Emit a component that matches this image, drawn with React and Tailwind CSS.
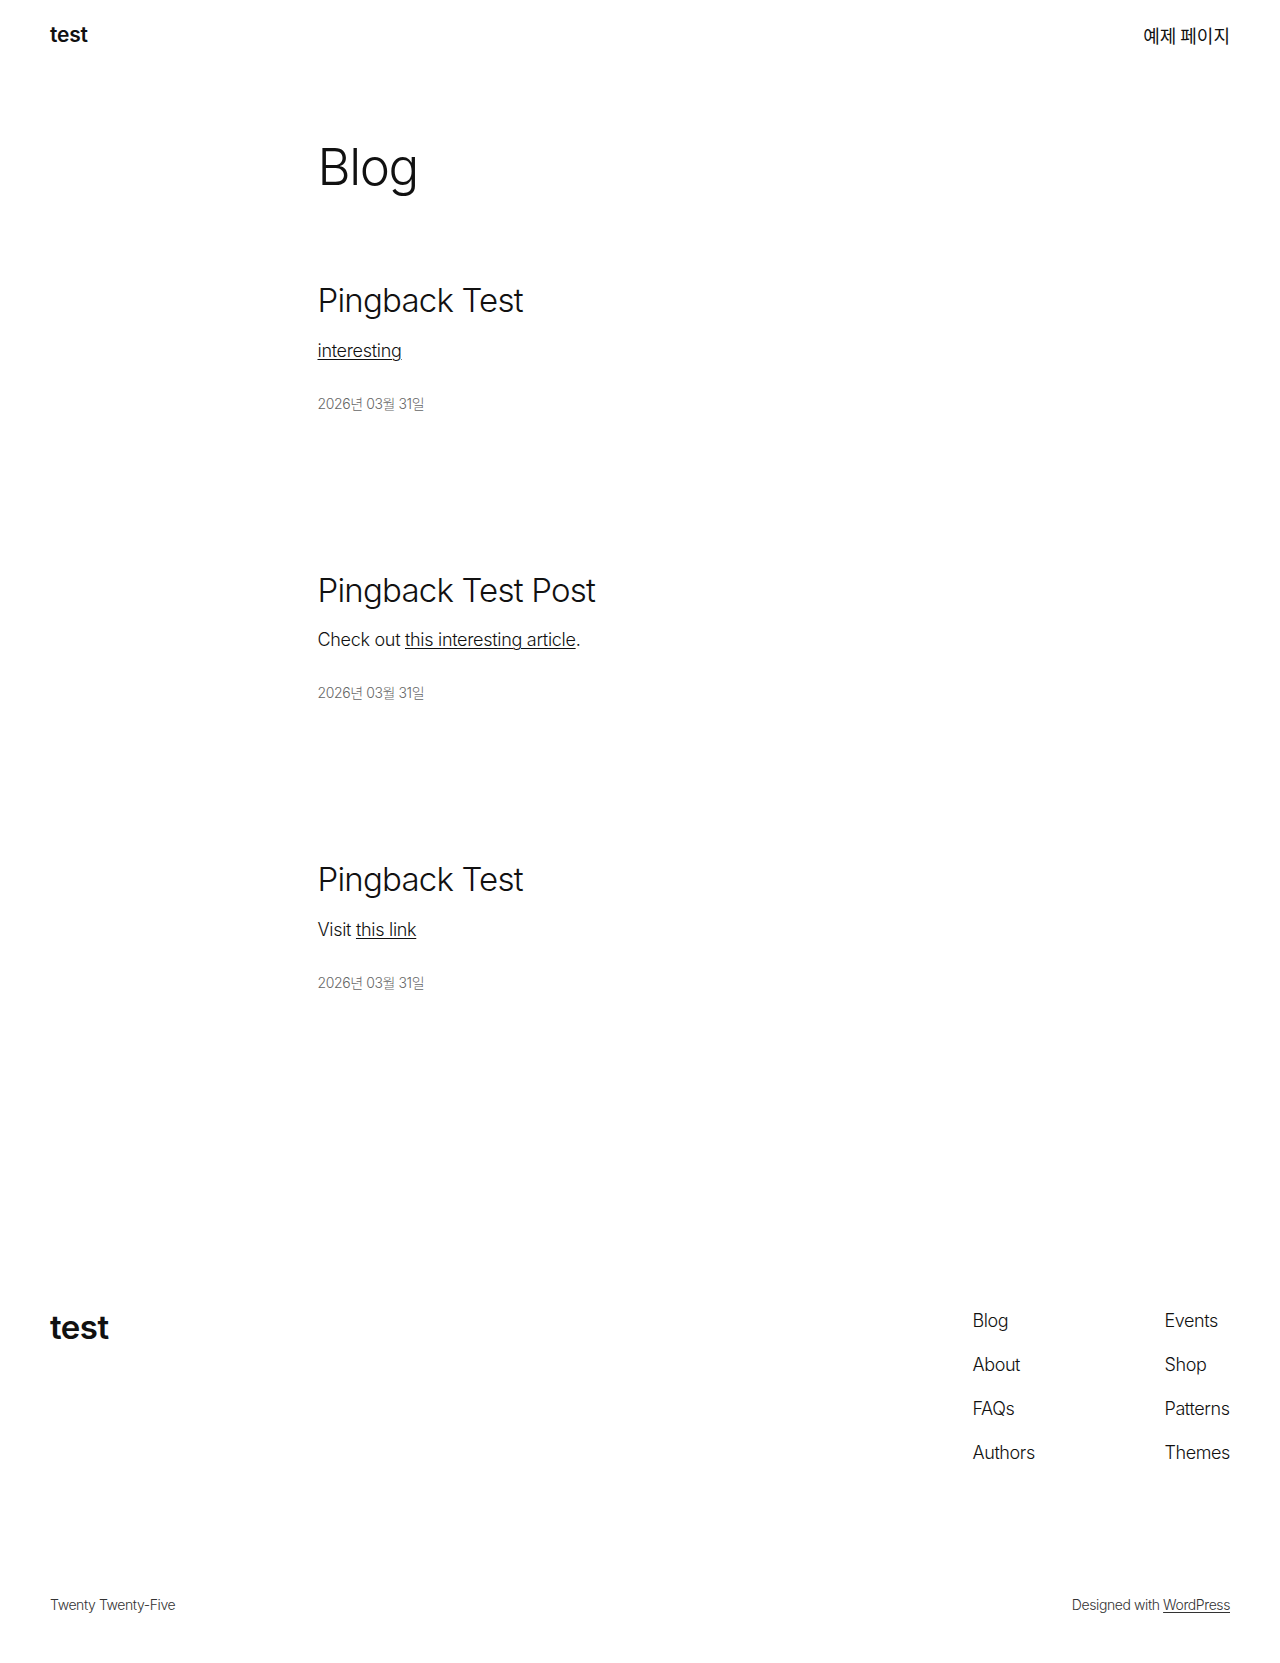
import React from 'react';

const posts = [
  { title: 'Pingback Test', body: <a href="#" className="underline underline-offset-2 decoration-1">interesting</a> },
  {
    title: 'Pingback Test Post',
    body: (
      <>
        Check out <a href="#" className="underline underline-offset-2 decoration-1">this interesting article</a>.
      </>
    ),
  },
  {
    title: 'Pingback Test',
    body: (
      <>
        Visit <a href="#" className="underline underline-offset-2 decoration-1">this link</a>
      </>
    ),
  },
];

const navLeft = ['Blog', 'About', 'FAQs', 'Authors'];
const navRight = ['Events', 'Shop', 'Patterns', 'Themes'];

const App = () => {
  return (
    <div className="min-h-[1663px] bg-white text-[#111111] font-['Inter','Noto_Sans_CJK_KR',sans-serif] flex flex-col">
      {/* Header */}
      <header className="h-[70px] px-[50px] flex items-center justify-between">
        <a href="#" className="text-[21px] font-semibold tracking-[-0.2px]">test</a>
        <a href="#" className="text-[18px] font-['Noto_Sans_CJK_KR',sans-serif]">예제 페이지</a>
      </header>

      {/* Main */}
      <main className="w-[645px] mx-auto pt-[66px]">
        <h1 className="text-[51px] font-light leading-[1.2] tracking-[-1.4px]">Blog</h1>

        <div className="mt-[84px] flex flex-col gap-[157px]">
          {posts.map((post, i) => (
            <article key={i} className="flex flex-col">
              <h2 className="text-[33px] font-light leading-[1.2] tracking-[-0.8px]">{post.title}</h2>
              <p className="mt-[16px] text-[18px] font-light leading-[1.5] tracking-[-0.3px]">{post.body}</p>
              <p className="mt-[29px] text-[14px] font-light text-[#666666] tracking-[-0.4px]">
                2026년 03월 31일
              </p>
            </article>
          ))}
        </div>
      </main>

      {/* Footer */}
      <footer className="mt-auto px-[50px]">
        <div className="flex justify-between items-start">
          <a href="#" className="text-[33px] font-semibold tracking-[-0.5px] leading-none mt-[4px]">test</a>
          <nav className="grid grid-cols-[192px_auto] text-[18px] font-light tracking-[-0.4px]">
            <ul className="flex flex-col gap-[17px]">
              {navLeft.map((n) => (
                <li key={n}><a href="#">{n}</a></li>
              ))}
            </ul>
            <ul className="flex flex-col gap-[17px]">
              {navRight.map((n) => (
                <li key={n}><a href="#">{n}</a></li>
              ))}
            </ul>
          </nav>
        </div>
        <div className="mt-[128px] pb-[48px] flex justify-between text-[14px] font-light tracking-[-0.4px] text-[#333]">
          <p>Twenty Twenty-Five</p>
          <p>
            Designed with <a href="#" className="underline underline-offset-2">WordPress</a>
          </p>
        </div>
      </footer>
    </div>
  );
};

export default App;
